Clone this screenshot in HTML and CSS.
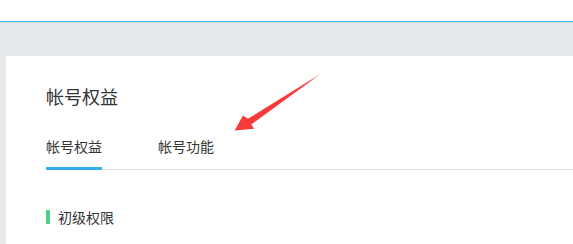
FILE: index.html
```html
<!DOCTYPE html>
<html lang="zh-CN">
<head>
<meta charset="utf-8">
<title>帐号权益</title>
<link rel="stylesheet" href="styles.css">
</head>
<body>
<header class="topbar"></header>
<main class="main">
  <section class="card">
    <h1 class="title">帐号权益</h1>
    <nav class="tabs">
      <div class="tab active">帐号权益</div>
      <div class="tab">帐号功能</div>
    </nav>
    <div class="section-head">
      <span class="mark"></span>
      <span class="section-title">初级权限</span>
    </div>
  </section>
</main>
<svg class="annot" width="573" height="244" viewBox="0 0 573 244" aria-hidden="true">
  <defs>
    <linearGradient id="fade" x1="235" y1="130" x2="321" y2="73" gradientUnits="userSpaceOnUse">
      <stop offset="0" stop-color="#f83a3a"/>
      <stop offset="0.85" stop-color="#f83a3a"/>
      <stop offset="1" stop-color="#fb8080"/>
    </linearGradient>
  </defs>
  <polygon points="234.7,130.5 243,115.5 248,118.8 321.5,73.3 251.3,124.6 254.2,128.8" fill="url(#fade)"/>
</svg>
</body>
</html>
```
FILE: styles.css
```css
html, body {
  margin: 0;
  padding: 0;
}
body {
  width: 573px;
  height: 244px;
  overflow: hidden;
  background: #e6e9ec;
  font-family: "Noto Sans CJK SC", "Liberation Sans", sans-serif;
  color: #333;
  position: relative;
}
.topbar {
  height: 21px;
  background: #fff;
  border-bottom: 1px solid #45b4ec;
  box-shadow: 0 1px 2px rgba(0, 0, 0, 0.05);
}
.main {
  padding: 34px 0 0 6px;
}
.card {
  background: #fff;
  padding: 31px 0 20px 40px;
}
.title {
  margin: 0;
  font-size: 18px;
  line-height: 18px;
  font-weight: normal;
  color: #333;
}
.tabs {
  display: flex;
  gap: 56px;
  margin-top: 34px;
  border-bottom: 1px solid #dcdcdc;
}
.tab {
  font-size: 14px;
  line-height: 14px;
  padding-bottom: 14px;
  border-bottom: 3px solid transparent;
  margin-bottom: -1px;
  color: #333;
}
.tab.active {
  border-bottom-color: #36aeea;
}
.section-head {
  display: flex;
  align-items: center;
  gap: 8px;
  margin-top: 40px;
}
.mark {
  width: 4px;
  height: 14px;
  background: #4cd28b;
}
.section-title {
  font-size: 14px;
  line-height: 14px;
}
.annot {
  position: absolute;
  left: 0;
  top: 0;
  pointer-events: none;
}
```
